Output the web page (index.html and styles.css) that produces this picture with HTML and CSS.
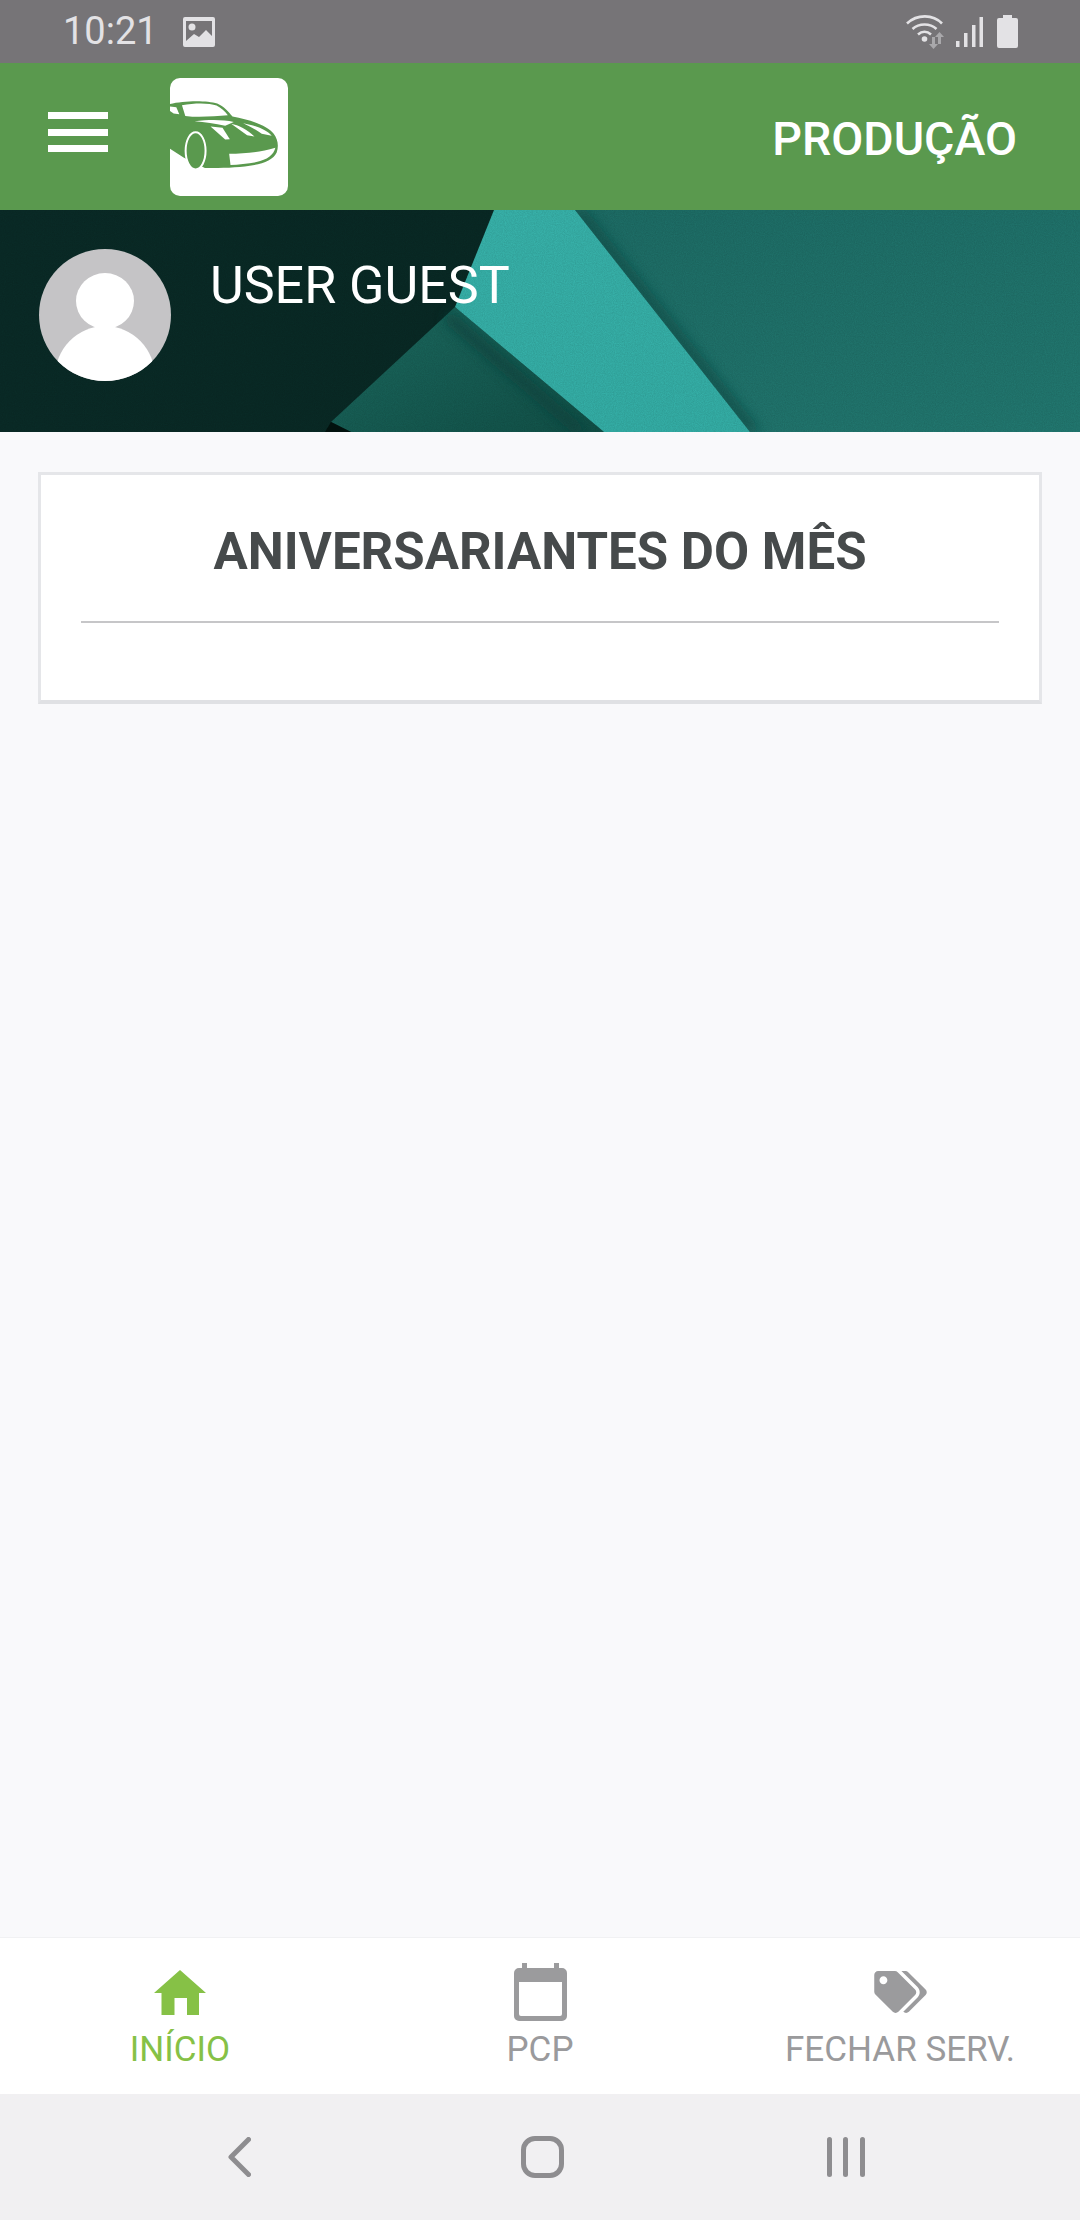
FILE: index.html
```html
<!DOCTYPE html>
<html lang="pt-BR">
<head>
  <meta charset="UTF-8">
  <meta name="viewport" content="width=device-width, initial-scale=1.0">
  <title>Produção</title>
  <link rel="stylesheet" href="styles.css">
</head>
<body>
  <div class="app">
    <div class="status-bar">
      <div class="status-left">
        <span class="status-time">10:21</span>
        <svg class="status-img" viewBox="0 0 32 30">
          <path fill="#e3e2e5" fill-rule="evenodd" d="M2 0h28a2 2 0 0 1 2 2v26a2 2 0 0 1-2 2H2a2 2 0 0 1-2-2V2a2 2 0 0 1 2-2zM9 6.500a3.500 3.500 0 1 0 0 7 3.500 3.500 0 0 0 0-7zM3 24l8-7 5 3 7-7 6 6V4H3z"/>
        </svg>
      </div>
      <div class="status-right">
        <svg class="status-wifi" viewBox="0 0 40 34" fill="none">
          <path stroke="#e3e2e5" stroke-width="2.600" d="M1 8.500C11-1 27-1 36 8.500M6.500 14C13 8 24 8 30.500 14M12 19.500c4-3.500 9-3.500 13 0"/>
          <circle cx="18.500" cy="24" r="2.800" fill="#e3e2e5"/>
          <path fill="#a9a8ab" d="M26 22h3v7h3l-4.500 5-4.500-5h3zM33.500 17l4.500 5h-3v7h-3v-7h-3z"/>
        </svg>
        <svg class="status-signal" viewBox="0 0 27 30">
          <path fill="#e3e2e5" d="M0 24h3.500v6H0zM8 16h3.500v14H8zM16 8h3.500v22H16zM23.500 0H27v30h-3.500z"/>
        </svg>
        <svg class="status-battery" viewBox="0 0 21 33">
          <path fill="#e3e2e5" d="M6 0h9v3h4a2 2 0 0 1 2 2v26a2 2 0 0 1-2 2H2a2 2 0 0 1-2-2V5a2 2 0 0 1 2-2h4z"/>
        </svg>
      </div>
    </div>

    <header class="app-bar">
      <div class="menu-icon"><span></span><span></span><span></span></div>
      <div class="logo">
        <svg viewBox="30 22 355 355">
          <path fill="#5a994e" d="M30 100C70 90 140 88 172 99 192 107 206 124 218 138 270 148 322 163 342 190 354 206 358 226 351 246 341 268 310 281 270 286 230 292 190 293 135 293L72 262 30 235z"/>
          <path fill="#fff" d="M66 104C105 97 148 97 170 105 184 112 195 122 204 134 165 136 120 142 76 136z"/>
          <path fill="#fff" d="M30 108l19 2 9 21-17-2-11-8z"/>
          <path fill="#fff" d="M104 152C150 146 190 147 222 154L196 166C165 158 135 155 104 152z"/>
          <path fill="#fff" d="M152 168L188 172 210 206 196 207z"/>
          <path fill="#fff" d="M214 160C236 164 262 178 284 198L262 194C246 182 230 172 214 160z"/>
          <path fill="#fff" d="M250 158C290 165 322 178 336 196L306 190C290 178 270 168 250 158z"/>
          <path fill="#fff" d="M208 250C255 250 300 246 347 232 342 254 322 268 290 275 265 280 235 282 212 284z"/>
          <ellipse cx="107" cy="241" rx="30" ry="56" fill="#5a994e" stroke="#fff" stroke-width="6"/>
        </svg>
      </div>
      <div class="app-title">PRODUÇÃO</div>
    </header>

    <section class="profile">
      <svg class="profile-bg" viewBox="0 0 1080 222" preserveAspectRatio="none">
        <defs>
          <linearGradient id="darkBg" x1="0" y1="0" x2="1" y2="0">
            <stop offset="0" stop-color="#0a2b27"/>
            <stop offset="1" stop-color="#082722"/>
          </linearGradient>
          <linearGradient id="rightPanel" x1="0" y1="0" x2="1" y2="1">
            <stop offset="0" stop-color="#1d6c65"/>
            <stop offset="1" stop-color="#227870"/>
          </linearGradient>
          <linearGradient id="midPanel" x1="0" y1="0" x2="1" y2="1">
            <stop offset="0" stop-color="#1c6a60"/>
            <stop offset="1" stop-color="#115047"/>
          </linearGradient>
          <linearGradient id="band" x1="0" y1="0" x2="0" y2="1">
            <stop offset="0" stop-color="#38b2aa"/>
            <stop offset="1" stop-color="#34aea6"/>
          </linearGradient>
          <filter id="soft"><feGaussianBlur stdDeviation="6"/></filter>
          <filter id="grain">
            <feTurbulence type="fractalNoise" baseFrequency="0.9" numOctaves="2" seed="4"/>
            <feColorMatrix values="0 0 0 0 0  0 0 0 0 0  0 0 0 0 0  0.500 0 0 0 -0.100"/>
          </filter>
        </defs>
        <rect width="1080" height="222" fill="url(#darkBg)"/>
        <polygon points="575,0 1080,0 1080,222 750,222" fill="url(#rightPanel)"/>
        <polygon points="455,97 604,222 351,222 331,212" fill="url(#midPanel)"/>
        <polygon points="331,212 351,222 325,222" fill="#03130f"/>
        <polygon points="570,0 586,0 762,222 745,222" fill="#114d47" opacity="0.700" filter="url(#soft)"/>
        <polygon points="450,100 590,222 572,222 444,112" fill="#0d423c" opacity="0.700" filter="url(#soft)"/>
        <polygon points="494,0 575,0 750,222 604,222 455,97" fill="url(#band)"/>
        <rect width="1080" height="222" filter="url(#grain)" opacity="0.300"/>
      </svg>
      <svg class="avatar" viewBox="0 0 132 132">
        <defs><clipPath id="avatarClip"><circle cx="66" cy="66" r="66"/></clipPath></defs>
        <circle cx="66" cy="66" r="66" fill="#c5c4c6"/>
        <g clip-path="url(#avatarClip)" fill="#fff">
          <ellipse cx="66" cy="52" rx="29" ry="28"/>
          <ellipse cx="66" cy="128" rx="50" ry="51"/>
        </g>
      </svg>
      <div class="user-name">USER GUEST</div>
    </section>

    <main class="content">
      <div class="card">
        <h2 class="card-title">ANIVERSARIANTES DO MÊS</h2>
        <hr class="card-line">
      </div>
    </main>

    <nav class="tabs">
      <div class="tab active">
        <div class="tab-icon">
          <svg class="icon-home" viewBox="0 0 52 45">
            <path fill="#86c146" d="M26 0l26 23h-7v22H33V28H20.500v17H7.500V23H0z"/>
          </svg>
        </div>
        <span class="tab-label">INÍCIO</span>
      </div>
      <div class="tab">
        <div class="tab-icon">
          <svg class="icon-calendar" viewBox="0 0 53 58">
            <path fill="#9b9b9d" fill-rule="evenodd" d="M8 0h5v5h27V0h5v5h3a5 5 0 0 1 5 5v43a5 5 0 0 1-5 5H5a5 5 0 0 1-5-5V10a5 5 0 0 1 5-5h3zM5 19v32a2 2 0 0 0 2 2h39a2 2 0 0 0 2-2V19z"/>
          </svg>
        </div>
        <span class="tab-label">PCP</span>
      </div>
      <div class="tab">
        <div class="tab-icon">
          <svg class="icon-tags" viewBox="0 0 640 512">
            <path fill="#9b9b9d" d="M497.941 225.941L286.059 14.059A48 48 0 0 0 252.118 0H48C21.490 0 0 21.490 0 48v204.118a48 48 0 0 0 14.059 33.941l211.882 211.882c18.744 18.745 49.136 18.746 67.882 0l204.118-204.118c18.745-18.745 18.745-49.137 0-67.882zM112 160c-26.510 0-48-21.490-48-48s21.490-48 48-48 48 21.490 48 48-21.490 48-48 48zm513.941 133.823L421.823 497.941c-18.745 18.745-49.137 18.745-67.882 0l-.36-.36L527.640 323.522c16.999-16.999 26.360-39.600 26.360-63.640s-9.362-46.641-26.360-63.640L331.397 0h48.721a48 48 0 0 1 33.941 14.059l211.882 211.882c18.745 18.745 18.745 49.137 0 67.882z"/>
          </svg>
        </div>
        <span class="tab-label">FECHAR SERV.</span>
      </div>
    </nav>

    <div class="system-nav">
      <svg class="sys-back" viewBox="0 0 23 40" fill="none">
        <path stroke="#8e8d90" stroke-width="5" stroke-linecap="round" stroke-linejoin="round" d="M20.500 2.500L3 20l17.500 17.500"/>
      </svg>
      <div class="sys-home"></div>
      <div class="sys-recent"><span></span><span></span><span></span></div>
    </div>
  </div>
</body>
</html>
```

FILE: styles.css
```css
* {
  box-sizing: border-box;
}
html, body {
  margin: 0;
  padding: 0;
}
body {
  font-family: 'Roboto', 'Liberation Sans', sans-serif;
  background-color: #f9f9fb;
}
.app {
  width: 1080px;
  height: 2220px;
  display: flex;
  flex-direction: column;
  overflow: hidden;
}

/* status bar */
.status-bar {
  height: 63px;
  background-color: #767477;
  display: flex;
  justify-content: space-between;
  align-items: center;
  padding: 0 62px 0 63px;
}
.status-left {
  display: flex;
  align-items: center;
}
.status-time {
  font-size: 38px;
  color: #e3e2e5;
  line-height: 63px;
}
.status-img {
  width: 32px;
  height: 30px;
  margin-left: 25px;
}
.status-right {
  display: flex;
  align-items: center;
}
.status-wifi {
  width: 40px;
  height: 34px;
}
.status-signal {
  width: 27px;
  height: 30px;
  margin-left: 10px;
}
.status-battery {
  width: 21px;
  height: 33px;
  margin-left: 14px;
}

/* app bar */
.app-bar {
  height: 147px;
  background-color: #5a994e;
  display: flex;
  align-items: center;
  padding: 0 63px 0 48px;
}
.menu-icon {
  width: 60px;
  height: 40px;
  margin-top: -9px;
  display: flex;
  flex-direction: column;
  justify-content: space-between;
}
.menu-icon span {
  display: block;
  height: 7px;
  background-color: #fff;
}
.logo {
  width: 118px;
  height: 118px;
  margin-left: 62px;
  background-color: #fff;
  border-radius: 10px;
  overflow: hidden;
}
.logo svg {
  display: block;
  width: 118px;
  height: 118px;
}
.app-title {
  margin-left: auto;
  margin-top: 5px;
  font-size: 46.500px;
  font-weight: 500;
  color: #fff;
}

/* profile banner */
.profile {
  position: relative;
  height: 222px;
  display: flex;
  align-items: flex-start;
  padding: 39px 0 0 39px;
  background-color: #0a2b27;
}
.profile-bg {
  position: absolute;
  left: 0;
  top: 0;
  width: 1080px;
  height: 222px;
}
.avatar {
  position: relative;
  width: 132px;
  height: 132px;
  flex-shrink: 0;
}
.user-name {
  position: relative;
  margin-left: 39px;
  margin-top: 7px;
  font-size: 52px;
  line-height: 60px;
  color: #fff;
}

/* content */
.content {
  flex: 1;
  padding: 40px 38px 0;
  background-color: #f9f9fb;
}
.card {
  height: 232px;
  background-color: #fff;
  border: 3px solid #e5e6e9;
  border-bottom: 4px solid #e0e1e4;
  padding: 0 40px;
}
.card-title {
  margin: 0;
  padding-top: 47px;
  font-size: 51px;
  line-height: 60px;
  font-weight: 700;
  color: #464a4b;
  text-align: center;
}
.card-line {
  margin: 39px 0 0;
  border: none;
  height: 2px;
  background-color: #c6c6c8;
}

/* bottom tabs */
.tabs {
  height: 157px;
  background-color: #fff;
  border-top: 1px solid #f1f1f3;
  display: grid;
  grid-template-columns: 1fr 1fr 1fr;
}
.tab {
  display: flex;
  flex-direction: column;
  align-items: center;
  padding-top: 25px;
  color: #9a9a9c;
}
.tab.active {
  color: #86c146;
}
.tab-icon {
  height: 58px;
  display: flex;
  align-items: center;
  justify-content: center;
}
.tab-icon svg {
  display: block;
}
.icon-home {
  width: 52px;
  height: 45px;
}
.icon-calendar {
  width: 53px;
  height: 58px;
}
.icon-tags {
  width: 53px;
  height: 42px;
}
.tab-label {
  margin-top: 7px;
  font-size: 35px;
  line-height: 44px;
  white-space: nowrap;
}

/* android nav */
.system-nav {
  height: 126px;
  background-color: #f1f0f2;
  display: grid;
  grid-template-columns: 1fr 1fr 1fr;
  align-items: center;
  justify-items: center;
  padding: 0 83px 0 88px;
}
.sys-back {
  width: 23px;
  height: 40px;
}
.sys-home {
  width: 43px;
  height: 42px;
  border: 5px solid #8e8d90;
  border-radius: 14px;
}
.sys-recent {
  width: 38px;
  height: 40px;
  display: flex;
  justify-content: space-between;
}
.sys-recent span {
  width: 5px;
  background-color: #8e8d90;
  border-radius: 3px;
}
```
